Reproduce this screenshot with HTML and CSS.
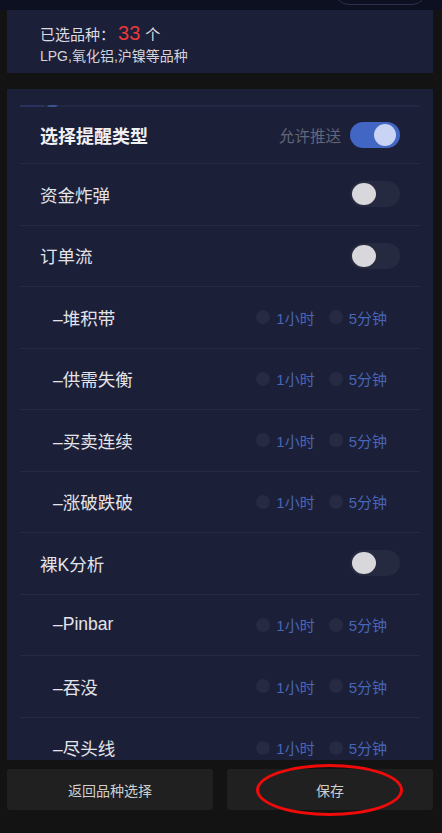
FILE: index.html
```html
<!DOCTYPE html>
<html lang="zh-CN">
<head>
    <meta charset="UTF-8">
    <meta name="viewport" content="width=device-width, initial-scale=1.0">
    <title>提醒设置</title>
    <link rel="stylesheet" href="styles.css">
</head>
<body>
    <div class="topbar">
        <span class="top-btn"></span>
    </div>

    <div class="summary">
        <div class="summary-count">已选品种：<span class="num">33</span> 个</div>
        <div class="summary-list">LPG,氧化铝,沪镍等品种</div>
    </div>

    <div class="panel">
        <div class="deco"><span class="deco-bar"></span><span class="deco-tip"></span></div>

        <div class="row row-title">
            <span class="title">选择提醒类型</span>
            <div class="push">
                <span class="push-text">允许推送</span>
                <span class="switch on"><span class="knob"></span></span>
            </div>
        </div>

        <div class="row">
            <span class="label">资金炸弹</span>
            <span class="switch"><span class="knob"></span></span>
        </div>

        <div class="row">
            <span class="label">订单流</span>
            <span class="switch"><span class="knob"></span></span>
        </div>

        <div class="row">
            <span class="label sub">–堆积带</span>
            <div class="options">
                <span class="opt"><i class="dot"></i>1小时</span>
                <span class="opt"><i class="dot"></i>5分钟</span>
            </div>
        </div>

        <div class="row">
            <span class="label sub">–供需失衡</span>
            <div class="options">
                <span class="opt"><i class="dot"></i>1小时</span>
                <span class="opt"><i class="dot"></i>5分钟</span>
            </div>
        </div>

        <div class="row">
            <span class="label sub">–买卖连续</span>
            <div class="options">
                <span class="opt"><i class="dot"></i>1小时</span>
                <span class="opt"><i class="dot"></i>5分钟</span>
            </div>
        </div>

        <div class="row">
            <span class="label sub">–涨破跌破</span>
            <div class="options">
                <span class="opt"><i class="dot"></i>1小时</span>
                <span class="opt"><i class="dot"></i>5分钟</span>
            </div>
        </div>

        <div class="row">
            <span class="label">裸K分析</span>
            <span class="switch"><span class="knob"></span></span>
        </div>

        <div class="row">
            <span class="label sub">–Pinbar</span>
            <div class="options">
                <span class="opt"><i class="dot"></i>1小时</span>
                <span class="opt"><i class="dot"></i>5分钟</span>
            </div>
        </div>

        <div class="row">
            <span class="label sub">–吞没</span>
            <div class="options">
                <span class="opt"><i class="dot"></i>1小时</span>
                <span class="opt"><i class="dot"></i>5分钟</span>
            </div>
        </div>

        <div class="row">
            <span class="label sub">–尽头线</span>
            <div class="options">
                <span class="opt"><i class="dot"></i>1小时</span>
                <span class="opt"><i class="dot"></i>5分钟</span>
            </div>
        </div>
    </div>

    <div class="actions">
        <button class="btn">返回品种选择</button>
        <button class="btn btn-save">保存<span class="mark"></span></button>
    </div>
</body>
</html>
```

FILE: styles.css
```css
* {
    margin: 0;
    padding: 0;
    box-sizing: border-box;
    font-family: "Liberation Sans", "Noto Sans CJK SC", sans-serif;
}

body {
    background-color: #131313;
    width: 442px;
    height: 833px;
    overflow: hidden;
}

.topbar {
    height: 10px;
    background-color: #0c1020;
    display: flex;
    justify-content: flex-end;
    align-items: flex-end;
    padding: 0 15px 5px 0;
    overflow: hidden;
}

.top-btn {
    display: block;
    width: 93px;
    height: 30px;
    border: 1px solid #2a3050;
    border-radius: 15px;
}

.summary {
    margin: 0 9px 0 7px;
    height: 63px;
    background-color: #1c1f38;
    padding: 11px 0 0 33px;
    color: #dcdce0;
}

.summary-count {
    font-size: 15px;
    line-height: 24px;
    display: flex;
    align-items: baseline;
}

.summary-count .num {
    color: #e8393b;
    font-size: 20px;
    margin: 0 5px 0 3px;
}

.summary-list {
    font-size: 14px;
    line-height: 19px;
    color: #d4d4d8;
}

.panel {
    margin: 16px 9px 0 7px;
    height: 671px;
    background-color: #1c1f38;
    padding: 16px 13px 0;
    overflow: hidden;
}

.deco {
    height: 2px;
    background-color: #222744;
    display: flex;
}

.deco-bar {
    width: 24px;
    background-color: #29325c;
}

.deco-tip {
    width: 9px;
    background-color: #3d508f;
    transform: skewX(-45deg);
    margin-left: 4px;
}

.row {
    height: 61.5px;
    display: flex;
    align-items: center;
    justify-content: space-between;
    padding: 0 20px;
    border-bottom: 1px solid #252a46;
}

.row-title {
    height: 57px;
}

.title {
    font-size: 18px;
    font-weight: bold;
    color: #f0f0f2;
}

.label {
    font-size: 17.5px;
    color: #e4e4e8;
}

.label.sub {
    padding-left: 13px;
}

.push {
    display: flex;
    align-items: center;
}

.push-text {
    font-size: 15.5px;
    color: #62667a;
    margin-right: 9px;
}

.switch {
    width: 50px;
    height: 26px;
    border-radius: 13px;
    background-color: #262a40;
    padding: 2px;
    display: flex;
}

.switch .knob {
    width: 24px;
    height: 22px;
    border-radius: 50%;
    background-color: #d8d8dc;
}

.switch.on {
    background-color: #4266c4;
    justify-content: flex-end;
    padding: 2px 4px;
}

.switch.on .knob {
    width: 22px;
    background-color: #c9d3f4;
}

.options {
    display: flex;
    gap: 14px;
    padding-right: 13px;
}

.opt {
    display: flex;
    align-items: center;
    font-size: 15px;
    color: #4766b6;
}

.dot {
    width: 14px;
    height: 14px;
    border-radius: 50%;
    background-color: #262a42;
    margin-right: 6px;
}

.actions {
    display: flex;
    gap: 14px;
    margin: 9px 9px 0 7px;
}

.btn {
    flex: 1;
    height: 41px;
    background-color: #202020;
    border: none;
    border-radius: 3px;
    color: #cfcfcf;
    font-size: 14px;
}

.btn-save {
    position: relative;
}

.btn-save .mark {
    position: absolute;
    left: 29px;
    top: -5px;
    width: 147px;
    height: 52px;
    border: 3px solid #f00a0a;
    border-radius: 50%;
}
```
